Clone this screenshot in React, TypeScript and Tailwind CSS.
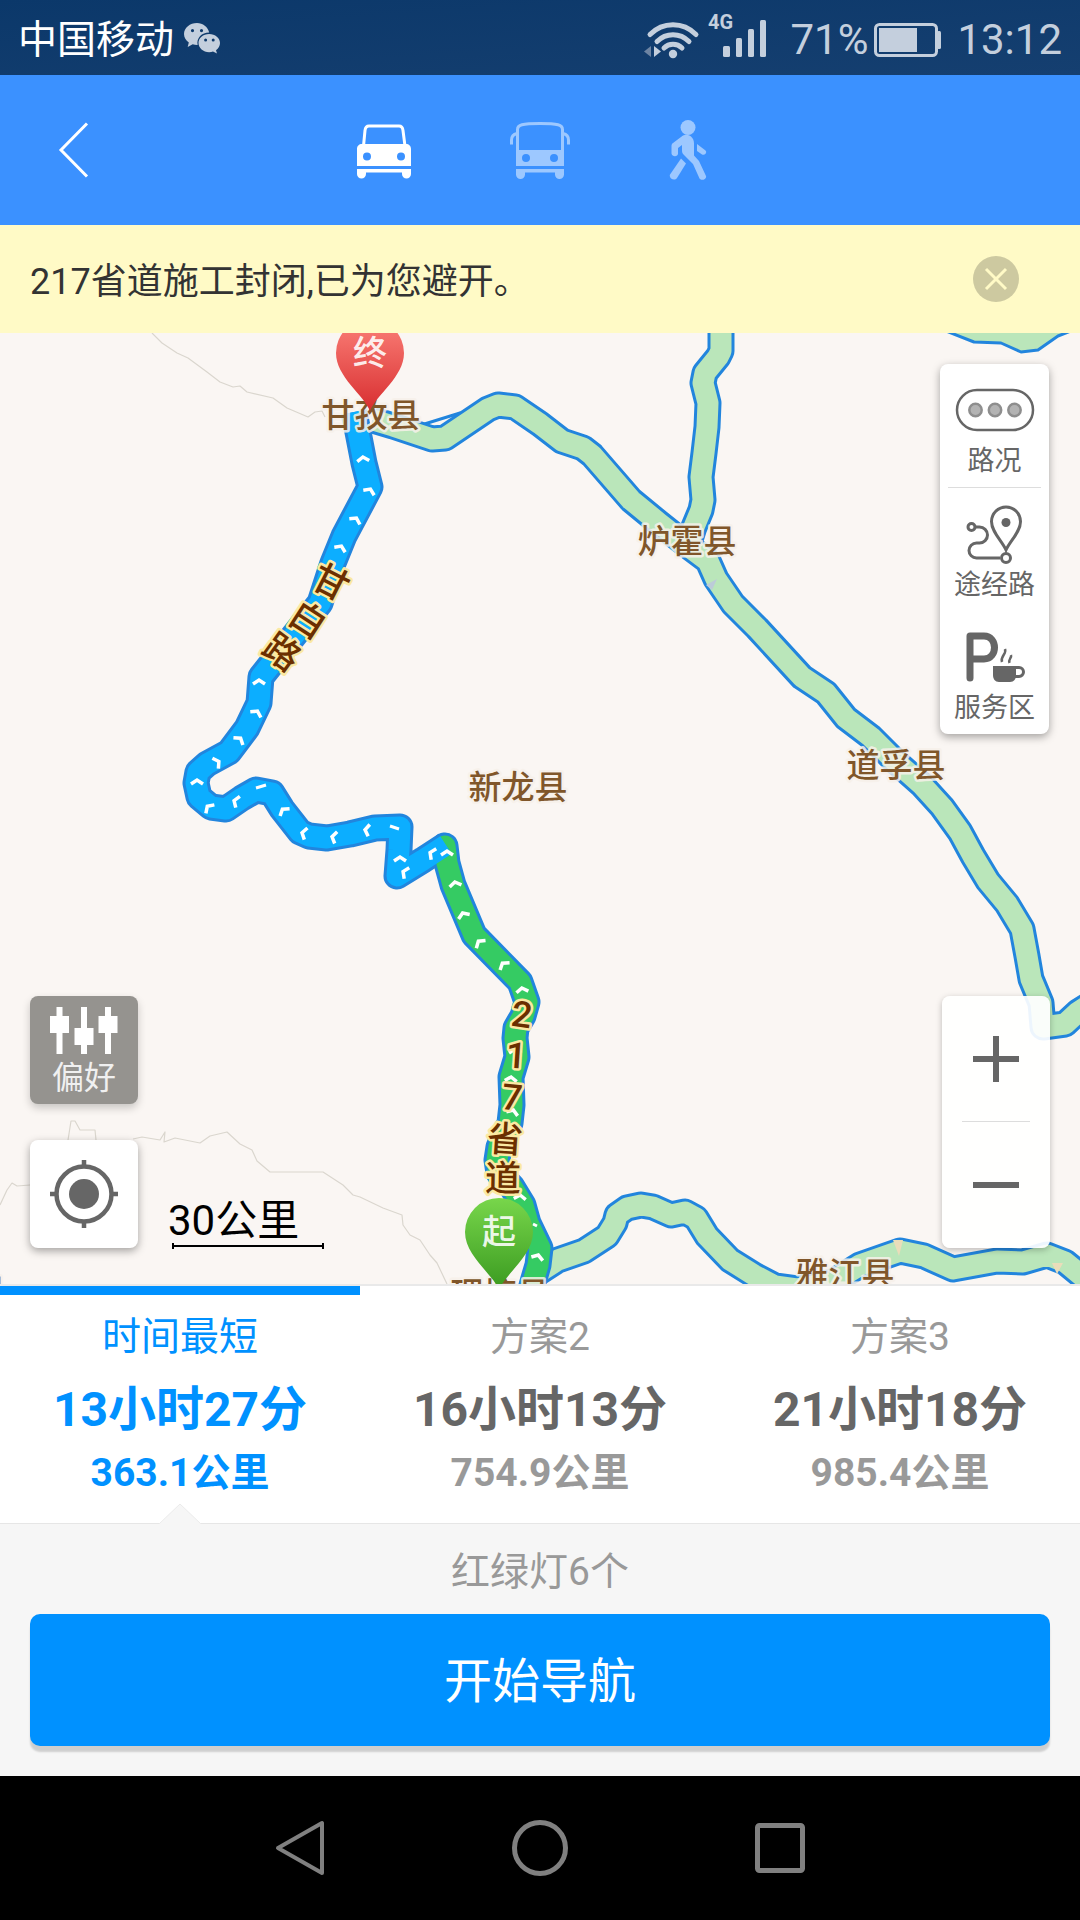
import type { ReactNode } from "react";

type Point = [number, number];

const toPath = (points: Point[]) => "M" + points.map((p) => p.join(" ")).join("L");

const routeBlue: Point[] = [
  [354, 412], [358, 432], [364, 463], [370, 487], [344, 536], [333, 563], [320, 603], [296, 633],
  [261, 677], [259, 703], [247, 728], [229, 752], [207, 764], [198, 772], [196, 783], [199, 797],
  [211, 807], [226, 809], [242, 798], [256, 790], [272, 793], [282, 809], [300, 832], [309, 836],
  [327, 838], [350, 834], [375, 828], [400, 827], [399, 850], [397, 876], [423, 860], [446, 845],
];

const routeGreen: Point[] = [
  [445, 846], [447, 863], [453, 885], [474, 935], [520, 982], [527, 1002], [523, 1016], [516, 1028],
  [515, 1038], [517, 1057], [511, 1077], [512, 1105], [510, 1123], [499, 1147], [497, 1160],
  [499, 1173], [512, 1187], [523, 1205], [528, 1223], [540, 1248], [538, 1265], [533, 1282], [528, 1300],
];

// Alternative roads, drawn pale under the chosen route
const sideRoads: Point[][] = [
  [
    [373, 420], [393, 426], [432, 439], [445, 438], [488, 409], [498, 405], [515, 407], [540, 424],
    [562, 441], [583, 448], [592, 455], [631, 500], [659, 523], [688, 546], [708, 561], [716, 579],
    [733, 604], [757, 628], [802, 677], [826, 693], [846, 718], [871, 737], [895, 761], [922, 785],
    [942, 807], [960, 832], [973, 856], [988, 881], [1007, 904], [1022, 929], [1027, 956],
    [1031, 979], [1041, 1003], [1043, 1027], [1065, 1024], [1078, 1012], [1100, 998],
  ],
  [
    [721, 320], [721, 351], [718, 357], [705, 373], [703, 383], [708, 403], [707, 427], [704, 453],
    [701, 477], [703, 500], [701, 510], [694, 527], [688, 546],
  ],
  [
    [533, 1276], [558, 1260], [584, 1251], [607, 1236], [615, 1223], [617, 1215], [627, 1208],
    [641, 1205], [653, 1207], [671, 1215], [685, 1212], [696, 1218], [707, 1236], [730, 1260],
    [754, 1275], [775, 1286], [797, 1289], [833, 1282], [860, 1265], [900, 1251], [924, 1256],
    [953, 1269], [997, 1261], [1023, 1262], [1047, 1255], [1065, 1262], [1082, 1276], [1100, 1285],
  ],
];

const trails: Point[][] = [
  [
    [152, 333], [162, 343], [177, 353], [188, 358], [207, 372], [220, 382], [233, 387], [240, 386],
    [247, 392], [273, 398], [287, 408], [308, 417], [315, 412], [322, 411], [325, 417],
  ],
  [[0, 1205], [7, 1190], [12, 1183], [17, 1186], [30, 1185]],
  [[68, 1140], [71, 1121], [75, 1121], [80, 1130], [95, 1130], [96, 1140]],
  [
    [133, 1139], [142, 1137], [160, 1140], [165, 1132], [164, 1142], [175, 1138], [200, 1143],
    [210, 1136], [227, 1132], [240, 1144], [252, 1150], [257, 1161], [270, 1172], [323, 1172],
    [343, 1185], [353, 1195], [360, 1197], [383, 1208], [402, 1215], [403, 1225], [410, 1235],
    [420, 1240], [430, 1255], [437, 1263], [447, 1284],
  ],
];

// x, y, heading in degrees
const arrows: [number, number, number][] = [
  [363, 458, -5], [370, 490, 25], [356, 519, 28], [341, 547, 25], [259, 681, 0], [257, 712, 28],
  [240, 739, 38], [218, 762, 60], [197, 781, 0], [208, 807, -45], [235, 801, -70], [283, 810, -38],
  [303, 833, -75], [333, 837, -78], [366, 830, -82], [400, 858, 0], [404, 872, -65], [431, 853, -65],
  [447, 852, 0], [455, 883, -10], [463, 914, -22], [479, 942, -40], [503, 964, -38], [522, 989, -8],
  [515, 1050, 0], [511, 1078, 5], [513, 1111, 20], [520, 1196, 5], [538, 1256, 18],
];

const towns = [
  { name: "甘孜县", x: 371, y: 427 },
  { name: "炉霍县", x: 687, y: 553 },
  { name: "新龙县", x: 518, y: 799 },
  { name: "道孚县", x: 896, y: 777 },
  { name: "雅江县", x: 845, y: 1286 },
  { name: "理塘县", x: 500, y: 1306 },
  { name: "县", x: -10, y: 1303 },
];

const roadNames: { char: string; x: number; y: number; turn: number }[] = [
  { char: "甘", x: 331, y: 582, turn: 27 },
  { char: "白", x: 308, y: 620, turn: 33 },
  { char: "路", x: 282, y: 652, turn: 36 },
  { char: "2", x: 522, y: 1014, turn: 8 },
  { char: "1", x: 516, y: 1055, turn: 4 },
  { char: "7", x: 512, y: 1097, turn: 6 },
  { char: "省", x: 505, y: 1139, turn: 4 },
  { char: "道", x: 503, y: 1178, turn: 1 },
];

const plans = [
  { label: "时间最短", time: "13小时27分", distance: "363.1公里" },
  { label: "方案2", time: "16小时13分", distance: "754.9公里" },
  { label: "方案3", time: "21小时18分", distance: "985.4公里" },
];

function StatusBar() {
  return (
    <div className="flex h-[75px] items-center justify-between bg-linear-to-br from-[#0b386a] to-[#153f70] pt-1 pr-[18px] pl-[18px] text-[#c4cfdd]">
      <div className="flex items-center gap-2.5">
        <span className="text-[39px] leading-[60px] text-white">中国移动</span>
        <svg className="mb-1 h-8 w-9" viewBox="0 0 36 32" fill="currentColor" aria-label="微信">
          <path
            fillRule="evenodd"
            d="M13 1C6 1 0 5.800 0 12c0 3.500 1.900 6.500 4.800 8.500L3.700 25l5-2.700c1.400.4 2.800.6 4.300.6h.6C12.300 16 18 10.500 25.200 10.600 24 5 18.800 1 13 1zM8.500 7a1.600 1.600 0 1 1 0 3.200 1.600 1.600 0 0 1 0-3.200zm9 0a1.600 1.600 0 1 1 0 3.200 1.600 1.600 0 0 1 0-3.200z"
          />
          <path
            fillRule="evenodd"
            d="M25.200 12C19 12 14.500 16 14.500 21s4.700 9.200 10.700 9.200c1.400 0 2.700-.2 3.800-.6l4 2-1-3.400c2.500-1.700 4-4.300 4-7.200 0-5-4.800-9-10.800-9zm-3.600 4.600a1.500 1.500 0 1 1 0 3 1.500 1.500 0 0 1 0-3zm7.600 0a1.500 1.500 0 1 1 0 3 1.500 1.500 0 0 1 0-3z"
          />
        </svg>
      </div>
      <div className="flex items-center text-[42px] leading-[60px]">
        <svg className="mb-1 h-[46px] w-[122px] overflow-visible" viewBox="0 0 122 46" fill="none" aria-hidden="true">
          <g stroke="currentColor" strokeWidth="5" strokeLinecap="round">
            <path d="M6 19.500C19 6.500 39 6.500 52 19.500" />
            <path d="M13 26.500C22 17.500 36 17.500 45 26.500" />
            <path d="M20 33C25 28 33 28 38 33" />
          </g>
          <circle cx="29" cy="39" r="4.200" fill="currentColor" />
          <path d="M7 31v11l-7-5.500z" fill="#6d84a3" />
          <path d="M10 31l7 5.500-7 5.500z" fill="currentColor" />
          <g fill="currentColor">
            <rect x="79" y="31" width="7" height="11" rx="1.500" />
            <rect x="92" y="23" width="6" height="19" rx="1.500" />
            <rect x="104" y="14" width="6" height="28" rx="1.500" />
            <rect x="116" y="5" width="6" height="37" rx="1.500" />
          </g>
          <text x="64" y="14" fontSize="20" fontWeight="700" fill="currentColor">4G</text>
        </svg>
        <span className="ml-6">71%</span>
        <svg className="ml-1.5 h-[34px] w-[67px]" viewBox="0 0 67 34" fill="none" aria-hidden="true">
          <rect x="1.500" y="1.500" width="61" height="31" rx="4" stroke="currentColor" strokeWidth="3" />
          <rect x="5" y="5" width="38" height="24" fill="currentColor" />
          <rect x="63" y="8" width="4" height="18" rx="1.500" fill="currentColor" />
        </svg>
        <span className="ml-4">13:12</span>
      </div>
    </div>
  );
}

function CarIcon() {
  return (
    <svg className="h-[60px] w-[54px]" viewBox="0 0 54 60" fill="none" aria-hidden="true">
      <path d="M6.500 26L8 10.500C8.400 7 9.500 6 12 6h30c2.500 0 3.600 1 4 4.500L48 26" stroke="currentColor" strokeWidth="3" />
      <path
        fill="currentColor"
        fillRule="evenodd"
        d="M5 24h44c3 0 5 2 5 5v17H0V29c0-3 2-5 5-5zm5 8.500a4 4 0 1 0 0 8 4 4 0 0 0 0-8zm34 0a4 4 0 1 0 0 8 4 4 0 0 0 0-8z"
      />
      <path d="M0 49h54v5a4.500 4.500 0 0 1-9 0v-1.500H9V54a4.500 4.500 0 0 1-9 0z" fill="currentColor" />
    </svg>
  );
}

function BusIcon() {
  return (
    <svg className="h-[60px] w-[60px]" viewBox="0 0 60 60" fill="none" aria-hidden="true">
      <path d="M7.500 34V9.500C7.500 5 12 3.500 30 3.500s22.500 1.500 22.500 6V34" stroke="currentColor" strokeWidth="3" />
      <path d="M7 13.500C3 14.500 1.500 17 1.500 20v4.500M53 13.500c4 1 5.500 3.500 5.500 6.500v4.500" stroke="currentColor" strokeWidth="3" />
      <path
        fill="currentColor"
        fillRule="evenodd"
        d="M6 30h48v16H6zm10 4a4 4 0 1 0 0 8 4 4 0 0 0 0-8zm28 0a4 4 0 1 0 0 8 4 4 0 0 0 0-8z"
      />
      <path d="M6 49h48v5.500a4.300 4.300 0 0 1-9 0v-2H15v2a4.300 4.300 0 0 1-9 0z" fill="currentColor" />
    </svg>
  );
}

function WalkIcon() {
  return (
    <svg className="h-[60px] w-[38px]" viewBox="0 0 38 60" fill="currentColor" aria-hidden="true">
      <circle cx="19" cy="7.500" r="7.500" />
      <path d="M14 15.500c3-1.500 6-.8 8 1 2 1.800 3 4 3 7v12l5 5.500 7 15c1 3-4.500 5.500-6.500 2.500L24 44 15 35c-2-2-2-3-2-5v-5l-4 3v5.500c0 3.500-6 3.500-6.500 0V26c0-1.500.5-2.300 1.500-3z" />
      <path d="M28 24l8.500 6.500c2 2-.8 5.500-3.500 4L28 31z" />
      <path d="M12 38.500l5 5L8 58c-2.500 3.500-8.500.5-7-3.500z" />
    </svg>
  );
}

function TopBar() {
  return (
    <header className="grid h-[150px] grid-cols-[148px_1fr_164px] items-center bg-[#3b91ff]">
      <button type="button" aria-label="返回" className="pl-[58px] text-white">
        <svg className="h-14 w-8" viewBox="0 0 32 56" fill="none" stroke="currentColor" strokeWidth="3">
          <path d="M29 1.500L3 28l26 26.500" />
        </svg>
      </button>
      <nav className="flex items-center justify-center gap-[99px] text-[#9dc8ff]">
        <button type="button" aria-label="驾车" className="text-white">
          <CarIcon />
        </button>
        <button type="button" aria-label="公交">
          <BusIcon />
        </button>
        <button type="button" aria-label="步行">
          <WalkIcon />
        </button>
      </nav>
    </header>
  );
}

function Notice() {
  return (
    <div className="flex h-[108px] items-center justify-between bg-[#fffac6] pr-[61px] pl-[30px]">
      <p className="pt-1.5 text-[36px] leading-[54px] text-[#333]">217省道施工封闭,已为您避开。</p>
      <button type="button" aria-label="关闭" className="rounded-full bg-[#cdc9a0] text-[#fffac6]">
        <svg className="h-[46px] w-[46px]" viewBox="0 0 46 46" stroke="currentColor" strokeWidth="3">
          <path d="M13 13l20 20M33 13L13 33" />
        </svg>
      </button>
    </div>
  );
}

function Pin({ x, y, char, fill }: { x: number; y: number; char: string; fill: string }) {
  return (
    <g transform={`translate(${x} ${y})`}>
      <path d="M0 58C-6 42-34 24-34 0a34 34 0 0 1 68 0C34 24 6 42 0 58z" fill={fill} />
      <text y="12" fontSize="34" fontWeight="500" textAnchor="middle" fill="#fff" fillOpacity="0.9">{char}</text>
    </g>
  );
}

function MapCanvas() {
  return (
    <svg
      className="absolute inset-0 h-full w-full"
      viewBox="0 333 1080 951"
      preserveAspectRatio="xMidYMid slice"
      fill="none"
      strokeLinejoin="round"
      role="img"
      aria-label="路线地图"
    >
      <defs>
        <linearGradient id="pinEnd" x1="0" y1="0" x2="0" y2="1">
          <stop offset="0" stopColor="#fb8078" />
          <stop offset="1" stopColor="#d82e30" />
        </linearGradient>
        <linearGradient id="pinStart" x1="0" y1="0" x2="0" y2="1">
          <stop offset="0" stopColor="#78d64b" />
          <stop offset="1" stopColor="#3a9a20" />
        </linearGradient>
      </defs>

      {trails.map((t, i) => (
        <path key={i} d={toPath(t)} stroke="#dad6ce" strokeWidth="1.2" />
      ))}

      <path d="M418 426l42-13-20 18z" fill="#faf6f3" stroke="#2285dd" strokeWidth="3" />

      {/* All casings go down before the fills so junctions stay open */}
      <g stroke="#2285dd" strokeWidth="27">
        {sideRoads.map((r, i) => (
          <path key={i} d={toPath(r)} />
        ))}
      </g>
      <g stroke="#bae6ba" strokeWidth="21">
        {sideRoads.map((r, i) => (
          <path key={i} d={toPath(r)} />
        ))}
      </g>
      <path
        d="M946 331L974 342L1001 343L1021 352L1038 350L1058 336L1076 329V320H946z"
        fill="#bae6ba"
        stroke="#2285dd"
        strokeWidth="3"
      />
      <path d="M893 1240h10l-4 16zM1052 1263h11l-6 11z" fill="#eaddba" />
      <path d="M706 585l11-6-5 11z" fill="#bccbd8" />

      <g strokeLinecap="round">
        <path d={toPath(routeGreen)} stroke="#2285dd" strokeWidth="27" />
        <path d={toPath(routeBlue)} stroke="#2285dd" strokeWidth="27" strokeLinecap="butt" />
        <path d={toPath(routeGreen)} stroke="#35cb63" strokeWidth="21" />
        <path d={toPath(routeBlue)} stroke="#0caeff" strokeWidth="21" strokeLinecap="butt" />
      </g>

      <g stroke="#fff" strokeWidth="3.500" strokeLinejoin="miter">
        {arrows.map(([x, y, turn]) => (
          <path key={`${x}-${y}`} d="M-6 3L0-1L6 3" transform={`translate(${x} ${y}) rotate(${turn})`} />
        ))}
        <path d="M256 788l10-3M390 826l9 3M533 1224l4 2" strokeWidth="3" />
      </g>

      <g fontSize="33" fill="#80562a" stroke="#f7f1ea" strokeOpacity="0.85" strokeWidth="5" paintOrder="stroke" textAnchor="middle" fontWeight="500">
        {towns.map((t) => (
          <text key={t.name + t.x} x={t.x} y={t.y}>{t.name}</text>
        ))}
      </g>
      <g fontSize="36" fill="#6b2f00" stroke="#fbe9a3" strokeWidth="5" paintOrder="stroke" textAnchor="middle" fontWeight="500">
        {roadNames.map((r) => (
          <text key={r.char + r.y} y="13" transform={`translate(${r.x} ${r.y}) rotate(${r.turn})`}>{r.char}</text>
        ))}
      </g>

      <Pin x={370} y={353} char="终" fill="url(#pinEnd)" />
      <Pin x={499} y={1232} char="起" fill="url(#pinStart)" />
    </svg>
  );
}

function LayerButton({ label, children }: { label: string; children: ReactNode }) {
  return (
    <button type="button" className="flex h-[123px] flex-col items-center gap-1 pt-4">
      <span className="flex h-[60px] items-center justify-center">{children}</span>
      <span className="text-[27px] leading-[34px]">{label}</span>
    </button>
  );
}

function LayerPanel() {
  return (
    <div className="absolute top-[31px] right-[31px] flex w-[109px] flex-col rounded-lg bg-white text-[#666] shadow-[0_3px_8px_rgba(0,0,0,0.35)]">
      <LayerButton label="路况">
        <svg className="h-11 w-20" viewBox="0 0 80 44" fill="none" stroke="currentColor">
          <rect x="2" y="2" width="76" height="40" rx="20" strokeWidth="2.500" />
          <g fill="#b3b3b3" stroke="#8e8e8e" strokeWidth="2.500">
            <circle cx="20.500" cy="22" r="6.200" />
            <circle cx="40" cy="22" r="6.200" />
            <circle cx="59.500" cy="22" r="6.200" />
          </g>
        </svg>
      </LayerButton>
      <hr className="mx-2 border-[#ddd]" />
      <LayerButton label="途经路">
        <svg className="h-[60px] w-[58px]" viewBox="0 0 58 60" fill="none" stroke="currentColor" strokeWidth="3">
          <path d="M40 46C36 37 25.500 28 25.500 17.500a14.500 14.500 0 0 1 29 0C54.500 28 44 37 40 46z" />
          <circle cx="40" cy="18.500" r="4.500" fill="currentColor" stroke="none" />
          <circle cx="5.500" cy="23" r="3.500" />
          <path d="M9.500 23h4a8 8 0 0 1 0 16h-3a7.500 7.500 0 0 0 0 15H34" />
          <circle cx="40" cy="54" r="4.500" />
        </svg>
      </LayerButton>
      <LayerButton label="服务区">
        <svg className="h-[52px] w-[60px]" viewBox="0 0 60 52" fill="none" stroke="currentColor">
          <path d="M5 47V5h14c14 0 14 23 0 23H5" strokeWidth="7" strokeLinecap="round" strokeLinejoin="round" />
          <path d="M28 35h23v9c0 4-2 7-6 7H34c-4 0-6-3-6-7z" fill="currentColor" stroke="none" />
          <path d="M50 36.500h4a4.500 4.500 0 0 1 0 9h-5" strokeWidth="3" />
          <path d="M40 18c2 5-5 7-3 13M46 24c1 3-3 4-1.500 8" strokeWidth="2.500" />
        </svg>
      </LayerButton>
    </div>
  );
}

function ZoomPanel() {
  return (
    <div className="absolute right-[30px] bottom-9 flex w-[108px] flex-col rounded-lg bg-white/92 text-[#666] shadow-[0_2px_6px_rgba(0,0,0,0.25)]">
      <button type="button" aria-label="放大" className="flex h-[125px] items-center justify-center">
        <svg className="h-12 w-12" viewBox="0 0 48 48" stroke="currentColor" strokeWidth="6">
          <path d="M1 24h46M24 1v46" />
        </svg>
      </button>
      <hr className="mx-5 border-[#ddd]" />
      <button type="button" aria-label="缩小" className="flex h-[126px] items-center justify-center">
        <svg className="h-12 w-12" viewBox="0 0 48 48" stroke="currentColor" strokeWidth="6">
          <path d="M1 24h46" />
        </svg>
      </button>
    </div>
  );
}

function MapTools() {
  return (
    <div className="absolute bottom-9 left-[30px] flex items-end gap-[30px]">
      <div className="flex flex-col gap-9">
        <button
          type="button"
          className="flex h-[108px] w-[108px] flex-col items-center rounded-lg bg-[#95938f] pt-[10px] text-white shadow-[0_4px_8px_rgba(0,0,0,0.2)]"
        >
          <svg className="h-12 w-[68px]" viewBox="0 0 68 48" fill="currentColor" aria-hidden="true">
            <path d="M6.500 1h6v9H19v17h-6.500v21h-6V27H0V10h6.500zM31 1h6v21h6.500v17H37v9h-6v-9h-6.500V22H31zM55 1h6v9h6.500v17H61v21h-6V27h-6.500V10H55z" />
          </svg>
          <span className="text-[32px] leading-[48px] text-[#f0f0f0]">偏好</span>
        </button>
        <button
          type="button"
          aria-label="定位"
          className="flex h-[108px] w-[108px] items-center justify-center rounded-lg bg-white text-[#666] shadow-[0_3px_8px_rgba(0,0,0,0.35)]"
        >
          <svg className="h-[70px] w-[70px]" viewBox="0 0 70 70" fill="none" stroke="currentColor">
            <circle cx="35" cy="35" r="27.500" strokeWidth="4.500" />
            <circle cx="35" cy="35" r="15" fill="currentColor" stroke="none" />
            <path d="M35 1v8M35 61v8M1 35h8M61 35h8" strokeWidth="4.500" />
          </svg>
        </button>
      </div>
      <div className="-mb-0.5 text-black">
        <p className="text-[42px] leading-[42px]">30公里</p>
        <svg className="ml-1 block h-2 w-[152px]" viewBox="0 0 152 8" stroke="currentColor" strokeWidth="2" fill="none">
          <path d="M1 1v6M151 1v6M1 4h150" />
        </svg>
      </div>
    </div>
  );
}

function PlanTabs() {
  return (
    <div className="grid grid-cols-3 border-t-2 border-b border-t-[#e9e9e9] border-b-[#e6e6e6] bg-white" role="tablist">
      {plans.map((plan, i) => {
        const active = i === 0;
        return (
          <button
            key={plan.label}
            type="button"
            role="tab"
            aria-selected={active}
            className={`relative border-t-[9px] pt-3 pb-[30px] text-center ${
              active ? "border-[#0091ff] text-[#0091ff]" : "border-transparent text-[#999]"
            }`}
          >
            <span className="block text-[39px] leading-[60px]">{plan.label}</span>
            <span className={`block text-[48px] leading-[86px] font-bold ${active ? "" : "text-[#666]"}`}>
              {plan.time}
            </span>
            <span className="block text-[39px] leading-10 font-bold">{plan.distance}</span>
            {active && (
              <svg
                className="absolute -bottom-px left-1/2 h-[21px] w-[42px] -translate-x-1/2"
                viewBox="0 0 42 21"
                fill="#f6f6f6"
                stroke="#ebebeb"
                aria-hidden="true"
              >
                <path d="M0 21L21 1L42 21" />
              </svg>
            )}
          </button>
        );
      })}
    </div>
  );
}

function NavBar() {
  return (
    <div className="flex h-36 items-center justify-center bg-black text-[#808080]">
      <button type="button" aria-label="后退" className="flex w-60 justify-center">
        <svg className="h-[58px] w-[50px]" viewBox="0 0 50 58" fill="none" stroke="currentColor" strokeWidth="4" strokeLinejoin="round">
          <path d="M47 4v50L3 29z" />
        </svg>
      </button>
      <button type="button" aria-label="主页" className="flex w-60 justify-center">
        <svg className="h-[58px] w-[58px]" viewBox="0 0 58 58" fill="none" stroke="currentColor" strokeWidth="5">
          <circle cx="29" cy="29" r="25.500" />
        </svg>
      </button>
      <button type="button" aria-label="最近任务" className="flex w-60 justify-center">
        <svg className="h-[50px] w-[50px]" viewBox="0 0 50 50" fill="none" stroke="currentColor" strokeWidth="5">
          <rect x="2.500" y="2.500" width="45" height="45" rx="2" />
        </svg>
      </button>
    </div>
  );
}

export default function App() {
  return (
    <div lang="zh-CN" className="flex min-h-screen flex-col font-['Roboto','Noto_Sans_CJK_SC',sans-serif]">
      <StatusBar />
      <TopBar />
      <Notice />

      <main className="relative min-h-[600px] flex-1 overflow-hidden bg-[#faf6f3]">
        <MapCanvas />
        <LayerPanel />
        <ZoomPanel />
        <MapTools />
      </main>

      <PlanTabs />

      <section className="bg-[#f6f6f6] px-[30px] pt-[18px] pb-[30px]">
        <p className="text-center text-[39px] leading-[60px] text-[#999]">红绿灯6个</p>
        <button
          type="button"
          className="mt-3 h-[132px] w-full rounded-[10px] bg-[#0091ff] pt-1 text-[48px] leading-[60px] text-white shadow-[0_6px_2px_rgba(0,0,0,0.16)]"
        >
          开始导航
        </button>
      </section>

      <NavBar />
    </div>
  );
}
